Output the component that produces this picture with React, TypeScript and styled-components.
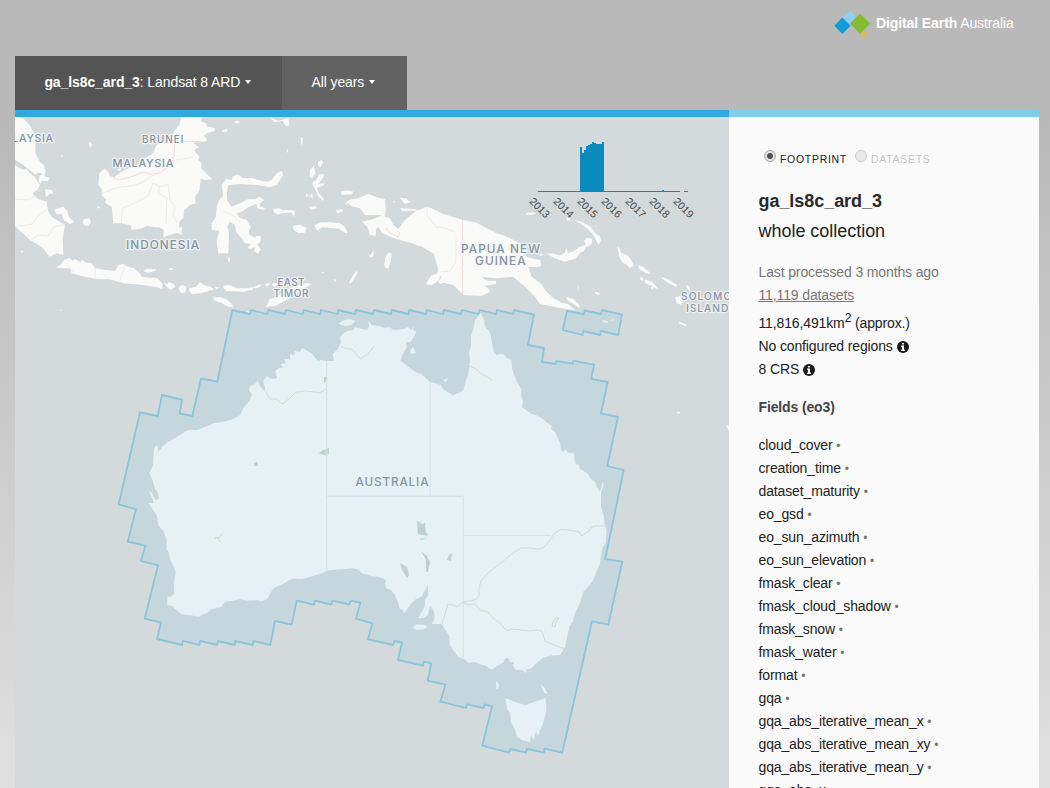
import React from "react";
import styled, { createGlobalStyle, css } from "styled-components";

const GlobalStyle = createGlobalStyle`
  * { box-sizing: border-box; }
  html { height: 100%; overflow: hidden; }
  body {
    margin: 0;
    height: 788px;
    overflow: hidden;
    font-family: "Liberation Sans", Arial, sans-serif;
    font-size: 14px;
    line-height: 23px;
    color: #222;
    background: linear-gradient(#b9b9b9 0, #b9b9b9 120px, #e0e0e0 788px);
  }
`;

const Page = styled.div`
  height: 788px;
  padding: 0 11px 0 15px;
  display: flex;
  flex-direction: column;
  overflow: hidden;
`;

const Header = styled.header`
  height: 56px;
  flex: none;
  display: flex;
  justify-content: flex-end;
  padding: 8px 25px 0 0;
`;

const Brand = styled.div`
  display: flex;
  height: 32px;
  gap: 6px;
  color: #fff;
  line-height: 30px;
  white-space: nowrap;
`;

const BrandName = styled.span`
  width: 138px;
  letter-spacing: -0.1px;
`;

const Nav = styled.nav`
  display: flex;
  height: 54px;
  flex: none;
`;

const NavItem = styled.div<{ $width: number; $dark?: boolean }>`
  width: ${(p) => p.$width}px;
  padding: 0 29px 2px 29.4px;
  display: flex;
  align-items: center;
  gap: 5px;
  color: #fff;
  white-space: nowrap;
  letter-spacing: -0.09px;
  background: ${(p) => (p.$dark ? "#545454" : "#626262")};
`;

const Caret = styled.span`
  border: 3px solid transparent;
  border-top: 4px solid #fff;
  border-bottom: 0;
`;

const Columns = styled.main`
  display: grid;
  grid-template-columns: 714px 310px;
  height: 678px;
  flex: none;
`;

const MapPane = styled.section`
  border-top: 7px solid #2eaade;
  background: #d4dadc;
  overflow: hidden;
`;

const MapSvg = styled.svg`
  display: block;
  width: 714px;
  height: 671px;
`;

const SidePane = styled.aside`
  border-top: 7px solid #7fcfe8;
  background: #fafafa;
  padding: 29px 30px 0 29.5px;
  letter-spacing: -0.13px;
  overflow: hidden;
`;

const Modes = styled.div`
  display: flex;
  height: 40px;
  padding-left: 5.5px;
`;

const Mode = styled.label<{ $active?: boolean }>`
  display: flex;
  gap: 4px;
  width: 91px;
  font-size: 10.5px;
  letter-spacing: 0.7px;
  line-height: 26px;
  color: ${(p) => (p.$active ? "#222" : "#c6c6c6")};
`;

const Radio = styled.span<{ $active?: boolean }>`
  width: 12px;
  height: 12px;
  margin-top: 4px;
  flex: none;
  border-radius: 50%;
  border: 1px solid ${(p) => (p.$active ? "#a8a8a8" : "#cfcfcf")};
  background: #e9e9e9;
  ${(p) =>
    p.$active &&
    css`
      background: radial-gradient(circle, #505050 0, #505050 2.6px, #e6e6e6 3.4px);
    `}
`;

const Heading = styled.h2`
  margin: 0;
  font-size: 18px;
  line-height: 30px;
  letter-spacing: -0.05px;
  color: #2a2a2a;
`;

const Period = styled.div`
  font-size: 18px;
  line-height: 30px;
  letter-spacing: -0.03px;
  margin-bottom: 15px;
`;

const Muted = styled.div<{ $link?: boolean }>`
  color: #777;
  ${(p) => p.$link && "text-decoration: underline; margin-bottom: 5px;"}
`;

const Fact = styled.div`
  display: flex;
  align-items: center;
  gap: 4px;
  height: 23px;
  sup {
    font-size: 12px;
    line-height: 0;
    vertical-align: 6px;
  }
`;

const FieldsTitle = styled.h3`
  margin: 15px 0;
  font-size: 14px;
  line-height: 23px;
  color: #444;
`;

const FieldList = styled.ul`
  list-style: none;
  margin: 0;
  padding: 0;
`;

const Field = styled.li`
  height: 23px;
  white-space: nowrap;
`;

const Dot = styled.span`
  color: #777;
  font-size: 12px;
`;

const fields = [
  "cloud_cover", "creation_time", "dataset_maturity", "eo_gsd", "eo_sun_azimuth",
  "eo_sun_elevation", "fmask_clear", "fmask_cloud_shadow", "fmask_snow", "fmask_water",
  "format", "gqa", "gqa_abs_iterative_mean_x", "gqa_abs_iterative_mean_xy",
  "gqa_abs_iterative_mean_y", "gqa_abs_x",
];

const InfoIcon = () => (
  <svg width="12" height="12" viewBox="0 0 12 12">
    <circle cx="6" cy="6" r="6" fill="#1c1c1c" />
    <path d="M5 2h2v1.5H5zM4.1 4.6H7v4h1V10H4V8.6h1V6h-.9z" fill="#fafafa" />
  </svg>
);

const Logo = () => (
  <svg width="36" height="32" viewBox="834 8 36 32">
    <path d="M850 10.5l7 7-7 7-7-7z" fill="#92cfec" />
    <path d="M842.3 17.5l8.2 8.2-8.2 8.3-8-8.3z" fill="#0d9ddb" />
    <path d="M863.8 31.3l3.6 3.5-3.6 3.6-3.6-3.6z" fill="#e0b84e" />
    <path d="M860 13.4l10 10.1-10 10.2-10-10.2z" fill="#86bc33" />
  </svg>
);

const australia =
  "M480.7 312.7L482 315 484.3 320 484.7 325 486 328.3 489 331 490.7 335 491.5 341 492.7 346.7 494 352 496.7 355 500 354 503.3 354.3 507 358 511.7 360.7 512 368 514 375 516.5 381 520 386.7 521.5 390 521 396 523 401 522 407 525 409.3 531.7 414 537 415.5 541.7 418.3 546 422 551.7 425.7 551 429 555 432 557.3 436.7 560 443 561 450 563.5 452 565.5 449 568 452.5 574 453.5 574.5 459 575.7 464 579 465 580 469 587.3 473.3 591 479 595 481.7 597 487 600 491.7 602 485 602.7 481 603.5 485 601 493 601 506.7 602.5 512 604 516.7 604.5 524 606.5 530 605.7 543 603 547 601.7 550 600 563.3 597 570 593.3 580 588 587 583.3 591.7 580 603 575 613.3 573 621 569.3 626.7 567 637 565.3 646.7 560 655 551 655.5 543.3 657.7 537 662.5 531.7 668.3 527 669 525.5 673 522 670 516 670 512.7 666 514 662 510 662 508.5 658 505 658.5 503.3 662.7 497 666 491.7 669.8 486 666 480 664 474 662 468.3 663 464 659 458.3 657 453 650 449.7 645 449.5 637 447 632 444 628 441.7 624 436 624 431.7 624.3 434.5 618 434.3 613 432 608 430 605 429 610 427.7 615 424 618 418.3 618.3 421 613 423 610 425 605 425 600 428.3 595 427.7 585 425 590 421.7 596.7 416 599 411.7 603.3 408 608 404 613.3 402.5 610 399.3 608.3 398 602 395 595 391 590 386 588 385 583 386.5 581 383.3 578.3 376 576.5 371 576 366.7 574.3 362 573.5 359 570 353.3 568.3 345 569 330 570 326.7 570.7 321 573.5 310 576.7 302 579 291.7 578.7 283 584 273.3 588.3 270 594 266.7 599.3 262 601 258 600.3 246.7 600.5 240 599.3 232 601 225 601.7 221 607 218.3 607.7 211.7 609.3 207 613 198.3 616.7 189 615 181.7 614.3 175 609 172 606 167.3 605 167.5 596 170 597 174 594 173.7 583 175.7 571.7 174 567 170 560 169 553 166.5 549 166.5 540 164 532 158.3 525 157 516 153 510 148.5 503 150 503 154 503 152 498 149 492 151 491.5 155.5 500 159 499 157.5 492 155 489 152.5 480 149.3 473.3 153 465 153.3 457 154.5 447 157.5 445 158 452 163 446 168 442 175 438 181 434.5 186.7 430.7 191 429.5 196.7 430.3 205 427 213.3 423.3 222 422 230 420 235 418 240 415 244 407 250 400 252 395 249 390 250.5 386 255 384 257.3 380.7 260 386 262 388.5 265 391 265 387 263 381 267 376 272 379 277 378 275 371 279 368 283 367.5 280.5 364 286 363 284.5 359 290 359.5 290 354 294 355.5 295 351 300 352 302 348 306 350 311.7 353.3 316 359 318.3 361 320 360 326 361 334 361 332.7 354 338 349 341 342 340 337 344 333 348.3 330.7 353 330 355 327 362 329 367 330 369 326 368 321 372 325 381.7 326.7 385 328 389 327 394 330 403.3 329.3 408 327 411 330 413.5 326.5 413 330 416.5 332 413 338 411 341.5 406 342.5 407 347 404 352 400 360.7 406 365 415 371.7 421 374 430 381.7 441 385 443 389 448 392.5 453.3 395 459 393 463.3 390 466 380 468.3 374 470 360 469 352 471 346 471 336 473.3 328.3 475 320 478 317Z";

const mainFootprint =
  "M232.3 310L250 314 251 310 267 314 268.3 310 285 314 286 310 302.5 314 303.5 310 320 314 321 310 337.3 314 338.3 310 355 314 356 310 373 314 374 310 391 314 391.7 310 408.5 314 409.3 310 426 314 426.7 310 443 314 444 310 461 314 462 310 478.5 314 479.5 310 496 314 497 310 513 314 514 310 534 314.5 528 345 544 348 542 362 555.7 364 556.3 361 572.7 363.7 573.3 360.7 594 364.7 591.3 379 607.7 382 601 413.3 618 417 607.3 466 623.7 470 605.3 559 622.3 561.7 608.3 624.7 592 621.3 562.3 752.7 544.7 748.7 543.7 752.7 527 749 526 752.7 510.3 749 509 752.7 482.3 745.7 492 706.3 484.7 704.3 483.7 708 467 704.3 466 708 440.3 701.7 445.3 684.7 427.7 680.7 431.3 663.3 424 661.7 423 665.7 398 660 402 642.3 394.7 641 393 645 368 639.3 372.3 623.3 356 618.7 360.3 602.7 350.7 600.7 349.3 604.7 332.3 600.7 331.3 604.7 315 600.7 313.7 604.7 296.7 600.7 291.7 624.7 275 621 270.3 645 253.3 641 252.7 645 235.3 641 234.7 645 218 641 217 645 200.3 641 199.3 645 183 641 182 645 157 639 161 622.7 144.7 618.7 158 565.3 141 561 145.3 545.7 127.7 541.7 136 509.3 118.7 504.3 140 412.3 157.7 416 162 395 182 399.7 179.7 413.3 192.3 416 201 378.3 217.3 381.7Z";

const reefFootprint =
  "M567 311L583.7 314 584.7 310.3 601 314 602 310 622 314.3 618.3 335 601 331 600 335 583.3 331 582.7 335 562.7 330Z";

const PlaceText = styled.text<{ $halo: boolean }>`
  font-family: Inter, "Open Sans", sans-serif;
  font-weight: 500;
  fill: #8795a3;
  stroke: ${(p) => (p.$halo ? "#f4f6f6" : "none")};
  stroke-opacity: 0.8;
  stroke-width: 2.6px;
  stroke-linejoin: round;
  paint-order: stroke;
`;

const places: { name: string; x: number; y: number; w: number; size: number; plain?: boolean }[] = [
  { name: "MALAYSIA", x: -6, y: 142.3, w: 59, size: 10.6 },
  { name: "BRUNEI", x: 142, y: 143.4, w: 41.5, size: 9.8 },
  { name: "MALAYSIA", x: 112.5, y: 167.2, w: 61, size: 11 },
  { name: "INDONESIA", x: 126, y: 249.3, w: 73, size: 11.8 },
  { name: "EAST", x: 277.5, y: 286, w: 27, size: 10 },
  { name: "TIMOR", x: 273.5, y: 296.5, w: 35, size: 10 },
  { name: "PAPUA NEW", x: 461, y: 252.5, w: 79, size: 11.8 },
  { name: "GUINEA", x: 475, y: 265.3, w: 50.5, size: 11.8 },
  { name: "SOLOMON", x: 681, y: 300, w: 59, size: 10.2 },
  { name: "ISLANDS", x: 686, y: 311.5, w: 50, size: 10.2 },
  { name: "AUSTRALIA", x: 355.5, y: 486, w: 73, size: 11.8, plain: true },
];

const barTops = [147, 153, 150, 146, 145, 144, 142, 143, 144, 144, 144, 142];
const years = [2013, 2014, 2015, 2016, 2017, 2018, 2019];

const Islands = () => (
  <g fill="#fafaf8">
    <g transform="translate(10 110) scale(.3333)">
      <path d="M0 15L40 25 62 50 76 80 76 130 90 155 101 165 107 185 103 195 88 188 75 193 40 165 0 140Z" />
      <path d="M0 155L20 168 38 180 50 178 60 190 78 207 90 225 82 240 68 248 80 265 110 275 115 305 125 320 140 330 165 345 158 385 160 435 140 430 118 440 100 415 60 390 0 335Z" />
      <path d="M58 195l18 6 4 20-16-8zM88 198l14-8 4 10 14 4-8 10-16-2-6 12-4-14zM105 238l20 2 5 10-12 2-10 10zM135 298l25-8 12 12 4 18 16 15-12 8-18-12-8-20-16 2zM222 328l16-3 5 12-8 12-14-4-2-10zM235 98l8-2 3 10-6 8zM152 135l8 1-3 6zM320 178l14-4-4 10z" />
      <path d="M520 0L572 0 575 35 588 40 592 50 612 53 615 62 590 70 582 78 592 90 582 96 560 92 552 100 567 112 552 120 560 130 568 140 565 150 575 160 573 175 590 192 607 207 588 210 572 208 568 240 555 262 557 280 540 285 523 300 520 325 508 335 508 355 515 350 516 375 500 368 460 382 462 360 448 352 435 352 410 347 395 355 365 360 362 345 342 342 336 340 310 340 305 290 285 278 288 268 275 255 276 240 265 225 268 190 285 175 295 185 300 198 312 202 340 182 365 170 395 160 405 145 430 130 440 105 465 92 485 80 495 60 508 45Z" />
      <path d="M635 62l15-6 5 6-14 5zM672 35l12-3 6 6-14 2zM780 22l25 10 30-8 3 22-10 3-10-16-25 3zM830 115l5 8-4 6z" />
      <path d="M640 255L635 225 648 208 665 210 668 198 685 194 700 205 725 204 745 210 770 215 785 210 800 190 815 182 820 195 800 225 780 232 740 225 690 222 655 225 650 250 652 272 665 290 690 280 715 267 735 268 750 260 762 270 752 280 735 283 715 292 700 302 680 310 690 325 710 330 722 350 715 372 738 385 730 403 705 400 695 385 678 365 675 345 660 335 652 350 657 370 655 430 625 430 620 395 628 362 605 360 605 340 618 320 620 290 628 270Z" />
      <path d="M740 282l10 0 0 8 15 4-4 6-20-5zM738 378l14 0 0 15-10 10 10 15-8 14-12-10 6-12-20 8-4-6 18-18zM790 297l18-2 10 6 30-1 6 6-4 14-6-12-30 2-12 4-10-8zM848 350l25-5v22l-15-5zM260 288l10 4-6 4z" />
      <path d="M138 472L152 465 162 450 178 443 188 452 195 447 212 457 215 450 230 458 245 460 255 475 285 480 315 482 325 465 340 462 352 470 372 475 390 490 395 500 415 503 440 503 457 520 457 537 440 532 400 525 340 520 300 508 260 507 225 500 185 490 180 475 150 475Z" />
      <path d="M398 482l14-6 26 2-4 6-20 4zM462 520l10 2 4-6 16 6 4 8-14 10-12-10zM505 535l10-10 14 4-2 18-14 2zM538 535l20-5 12-14 12 10 20 4 10 8-20 6-20 6-26 2-8-10zM612 530l14 2-6 6zM640 527l20-2 20 10 30 0 20-4-2 8-30 6-50-2-8-10zM728 533l20-10 8 2-14 10zM765 525l12-8 3 6-10 6zM785 523l14-5 4 6-10 6zM608 563l20-2 20 6 18 15 4 10-16-2-20-12-20-5zM655 440l6 6-3 14-4-8zM148 599l8 1-4 3zM478 475l10 0 2 4-12 1zM32 422l8 2-4 6z" />
    </g>
    <path d="M266 307L270 299 278 296 290 288 306 283 312 284 300 291 285 301 275 306Z" />
    <g transform="translate(290 110) scale(.3333)">
      <path d="M168 275L185 268 205 265 235 252 260 262 285 268 287 300 285 320 300 325 310 345 325 357 345 330 375 305 410 290 425 295 460 312 520 330 560 338 590 355 620 370 640 376 660 385 690 400 710 440 726 445 750 450 754 467 740 472 715 470 725 500 745 515 760 530 765 540 790 565 815 578 835 582 855 600 830 597 800 592 750 582 735 560 700 525 690 518 670 500 620 505 575 500 590 512 618 512 618 522 580 528 595 535 600 545 575 558 520 555 505 540 490 525 475 522 460 518 450 522 445 515 455 500 440 495 445 480 440 460 430 430 395 410 360 398 330 390 300 380 275 368 266 350 258 358 258 377 240 375 232 350 215 335 240 330 265 322 275 315 225 315 210 295 185 288Z" />
      <path d="M408 522l14-24 20-8 10 8-8 16-20 12zM330 295l45 2 8 5-48 0zM330 263l18 2 14 12-18 4zM310 272l6 3-4 3zM152 245l18-4 20 4-4 8-30 2zM138 300l18-2 4 6-18 6zM56 290l20-2 5 7-18 4zM85 155l10-5 4 10-8 12-8-8zM60 180l12-14 4 24-10 15-7-5zM75 215l14-22 14 0-4 12-16 18 18-3 2 5-22 8 4 15 18 20-5 4-14-14-8-20-10-18 6-8zM48 250l10 8 8-8 4 14-16-6-6 4zM32 82l7 2-3 24-3-10zM10 348l20-4 20 10-6 14-20 2-14-12zM75 345l18-8 25 0 30 2 15 10 10 18-6 3-20-14-25-2-26-2-14 10-5-6zM285 445l10-18 10 5-2 20-8 24-12-4zM178 515l12-20 10-12 3 4-12 22-10 12zM235 425l5 12 12-18-2 20-10 4zM130 508l8 1-2 8zM95 487l6-2 0 6zM0 302l16 0-4 20-4-14zM165 278l10 2-5 5z" />
    </g>
    <g transform="translate(500 110) scale(.3333)">
      <path d="M140 432L155 430 180 436 195 428 200 415 204 430 225 422 240 410 258 405 252 392 262 383 277 386 275 402 258 412 250 425 240 428 230 445 195 455 165 445Z" />
      <path d="M223 330L245 335 272 350 285 368 300 380 303 390 296 404 288 390 280 375 255 350 235 338ZM352 410l6 4 6 14 18 8 10 12 10 18-12 8-10-10-12-6-10-18zM415 465l14 5 12 10 12 12-16-2-20-14zM486 500l22 10 24 16-4 4-22-10-20-14zM558 525l10 4 4 16-10-8zM420 502l8 0 2 10-8-2zM435 508l22 8 18 20-10-2-16-10-14-4zM452 530l8 2-2 8zM525 562l15-4 12 14-8 12-14-4zM78 309l20-2 10 4-12 4-16 0zM198 323l10 0 4 7-10 2zM285 545l14 4-2 7-12-6zM198 562l22 4 8 10 10 8 0 10-14-10-20-12zM232 525l4 4-2 14zM537 635l20 8 2 6-20-8zM118 430l12 5-8 4zM282 345l8 3-4 2z" />
    </g>
    <path d="M726 425l3 1v5zM602 320l5 1 1 2-5-1zM611 320l3-1-1 2zM676 412l4 0-1 2z" />
    <path d="M412.5 627.5l4-3 8 .5 3 2-4 2.5-8 .5zM338.5 323l6-3 6-1 5 2-4 4-6 1-5-1zM410 350l3-3 3 6-5 1zM496 681l3 3 0 4-3 1zM540.5 684.5l4 3 2.5 5-3 .5zM544 691l4 2-3 1zM443 380l5-2-2 4z" />
    <path d="M505.5 698L510 700 518 703 526 705 534 702 540 700 545.5 698 546.5 710 544.5 718 543 724 540 730 538 736 536 731 534 740 531 735 530 742 522 740 517 737 515 730 511 722 510 713 507 709Z" />
    <path d="M246 311l6 1-3 2zM258 312l5 0-2 2z" />
  </g>
);

const MapDrawing = () => (
  <MapSvg viewBox="15 117 714 671">
    <Islands />
    <path d={australia} fill="#fafaf8" />
    <g fill="#cbd3d5">
      <path d="M416 521l4 1 1 2 4-1 1 10 2 1-1 2-9-2-1-12zM419 539l7-1-4 2zM421 551l6 5 3 6-2 10-2 0 0-12zM400 563l7 4 2 8-2 3-5-8zM452 553l-1 8-4-1 2-5zM319 453l4-3 6-2 0 6-4 1-5-1zM324 377l3 0-1 4-2 3zM254 463l3-1 1 4-4 0z" />
    </g>
    <g fill="none" stroke="#e3e5e8" strokeWidth="1">
      <path d="M326.7 361V570M326.7 496.3H463.3V658M430 382V496M463.3 535.3H551" />
    </g>
    <g fill="none" stroke="#dde0e4" strokeWidth="1">
      <path d="M606 526L596 526 592 527 589 531 586 533 582 536 579 532 575 531 568 530 560 529.5 555 533 551 538 547 544 543 548 537 549 530 548 521 548 515 552 508 557 501 563 494 568 487 574 481 581 479 588 479 596 475 600 463 602M463 602L468 605 475 604 480 610 488 612 493 618 500 623 504 628 508 631 511 629 522 630 530 631 537 630 542 631 545 641 554 645 565 649M442 624L445 614 448 604 453 605 457 607 463 602M265 391L270 399 276 399 282 404 290 398 296 392 305 391 314 392 320 393 326 389M341 346L346 349 352 349 356 354 360 359 368 354 374 346M470 366L476 369 482 374 492 380M215 537l3 1 5-4M216 539l-2-1M218 538l2 4" />
      <path d="M553 622l2-4 4 0-3 4-1 5-3-1z" />
    </g>
    <g fill="none" stroke="#efd9da" strokeWidth="0.9">
      <path d="M462.7 220V265L461.7 268 462.7 272V295M105 169L112 176 118 180 127 178 136 175 143 172 151 174 160 173 168 165 174 156 175 141 201 142M386 228L390 233 398 237 400 232" />
    </g>
    <g fill="none" stroke="#ebe6e7" strokeWidth="0.8">
      <path d="M102 194L110 190 120 187 132 186 143 182 151 176 158 174M121 223L122 214 123 208 135 203 148 196 153 183 160 187 168 184 170 200 175 206 173 215 177 222M166 224L167 198 158 193 160 186M15 199L28 200 37 196M15 227L32 224 40 214 47 210M30 241L38 235 48 236 54 227 64 225M427 207V215L436 227 445 228 455 232M456 234L456 262 450 271 440 272M223 211L232 215 240 222M65 263l8 9M95 266v13M125 266l-5 14M158 174l9-6 4-7 22-4" />
    </g>
    <g fill="#86c9e1" fillOpacity="0.18" stroke="#7fc2dc" strokeWidth="1.8" strokeLinejoin="round">
      <path d={mainFootprint} strokeOpacity="0.85" />
      <path d={reefFootprint} strokeOpacity="0.85" />
    </g>
    {places.map((p) => (
      <PlaceText key={p.name + p.y} x={p.x} y={p.y} fontSize={p.size} textLength={p.w} $halo={!p.plain}>
        {p.name}
      </PlaceText>
    ))}
    <g fill="#0b8bbd">
      {barTops.map((top, i) => (
        <rect key={i} x={580 + i * 2} y={top} width="2" height={192 - top} />
      ))}
      <rect x="538" y="191" width="142" height="1" />
      <rect x="684" y="191" width="4" height="1" />
      <rect x="662" y="190" width="2" height="1" />
    </g>
    <g fontFamily="Liberation Sans, Arial, sans-serif" fontSize="10.6" fill="#4a4a4a">
      {years.map((year, i) => (
        <text key={year} transform={`translate(${528.7 + i * 24} 202) rotate(45)`}>
          {year}
        </text>
      ))}
    </g>
  </MapSvg>
);

export default function App() {
  return (
    <>
      <GlobalStyle />
      <Page>
        <Header>
          <Brand>
            <Logo />
            <BrandName><b>Digital Earth</b> Australia</BrandName>
          </Brand>
        </Header>
        <Nav>
          <NavItem $width={267} $dark>
            <span><b>ga_ls8c_ard_3</b>: Landsat 8 ARD</span>
            <Caret />
          </NavItem>
          <NavItem $width={125}>
            <span>All years</span>
            <Caret />
          </NavItem>
        </Nav>
        <Columns>
          <MapPane>
            <MapDrawing />
          </MapPane>
          <SidePane>
            <Modes>
              <Mode $active><Radio $active />FOOTPRINT</Mode>
              <Mode><Radio />DATASETS</Mode>
            </Modes>
            <Heading>ga_ls8c_ard_3</Heading>
            <Period>whole collection</Period>
            <Muted>Last processed 3 months ago</Muted>
            <Muted $link>11,119 datasets</Muted>
            <Fact><span>11,816,491km<sup>2</sup> (approx.)</span></Fact>
            <Fact>No configured regions <InfoIcon /></Fact>
            <Fact>8 CRS <InfoIcon /></Fact>
            <FieldsTitle>Fields (eo3)</FieldsTitle>
            <FieldList>
              {fields.map((name) => (
                <Field key={name}>{name} <Dot>•</Dot></Field>
              ))}
            </FieldList>
          </SidePane>
        </Columns>
      </Page>
    </>
  );
}
